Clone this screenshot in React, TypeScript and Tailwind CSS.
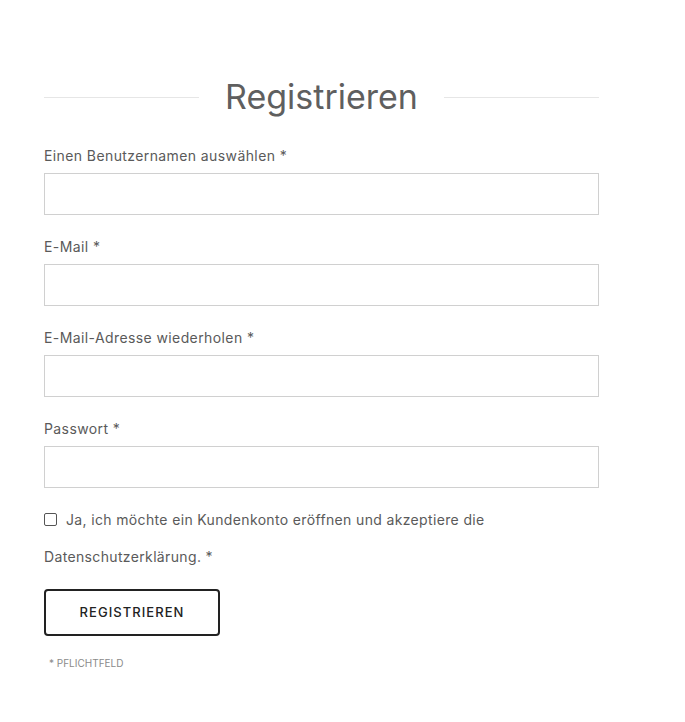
import React from 'react';

const fields = [
  'Einen Benutzernamen auswählen *',
  'E-Mail *',
  'E-Mail-Adresse wiederholen *',
  'Passwort *',
];

const App = () => {
  return (
    <div className="min-h-[722px] bg-white" style={{ fontFamily: 'Inter, "Noto Sans", sans-serif' }}>
      <div className="ml-[44px] w-[555px] pt-[72px]">
        <div className="flex items-center gap-[26px]">
          <div className="h-px flex-1 bg-[#e6e6e6]"></div>
          <h1 className="text-[34px] leading-[50px] font-normal text-[#5f5f5f]">Registrieren</h1>
          <div className="h-px flex-1 bg-[#e6e6e6]"></div>
        </div>

        <form className="mt-[24px]">
          {fields.map((f) => (
            <div key={f} className="mb-[22px]">
              <label className="block text-[14px] leading-[20px] tracking-[0.4px] text-[#5a5a5a] mb-[7px]">{f}</label>
              <input type="text" className="block w-full h-[42px] border border-[#d0d0d0] bg-white outline-none" />
            </div>
          ))}

          <div className="-mt-[9px] text-[14px] leading-[37px] tracking-[0.35px] text-[#5a5a5a]">
            <label className="flex items-center gap-[9px]">
              <span className="inline-block w-[13px] h-[13px] border border-[#555] rounded-[2px] bg-white"></span>
              <span>Ja, ich möchte ein Kundenkonto eröffnen und akzeptiere die</span>
            </label>
            <div>Datenschutzerklärung. *</div>
          </div>

          <button
            type="button"
            className="mt-[14px] w-[176px] h-[47px] border-2 border-[#222] rounded-[4px] bg-white text-[13px] font-medium tracking-[0.08em] text-[#222]"
          >
            REGISTRIEREN
          </button>

          <div className="mt-[20px] ml-[5px] text-[10px] leading-[14px] text-[#8a8a8a]">* PFLICHTFELD</div>
        </form>
      </div>
    </div>
  );
};

export default App;
